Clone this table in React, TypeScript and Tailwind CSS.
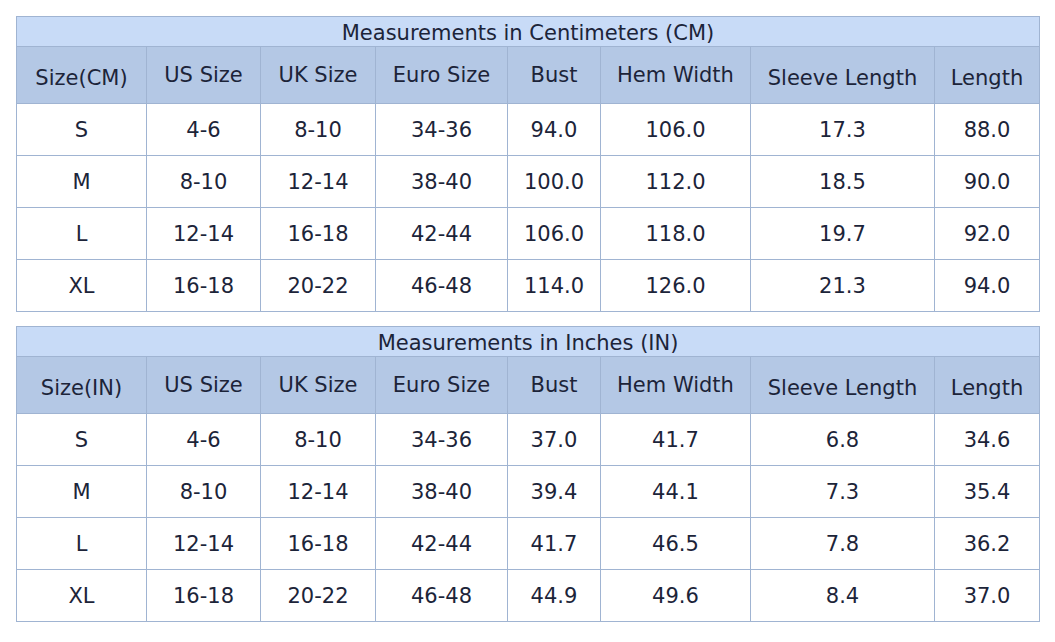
const headers = ["US Size", "UK Size", "Euro Size", "Bust", "Hem Width", "Sleeve Length", "Length"];
const widths = [130, 114, 115, 132, 93, 150, 184, 105];
// columns whose header text sits a little lower in the reference
const lowHeader = [false, false, false, false, false, true, true];

type Table = {
  title: string;
  unit: string;
  rows: string[][];
};

const tables: Table[] = [
  {
    title: "Measurements in Centimeters (CM)",
    unit: "Size(CM)",
    rows: [
      ["S", "4-6", "8-10", "34-36", "94.0", "106.0", "17.3", "88.0"],
      ["M", "8-10", "12-14", "38-40", "100.0", "112.0", "18.5", "90.0"],
      ["L", "12-14", "16-18", "42-44", "106.0", "118.0", "19.7", "92.0"],
      ["XL", "16-18", "20-22", "46-48", "114.0", "126.0", "21.3", "94.0"],
    ],
  },
  {
    title: "Measurements in Inches (IN)",
    unit: "Size(IN)",
    rows: [
      ["S", "4-6", "8-10", "34-36", "37.0", "41.7", "6.8", "34.6"],
      ["M", "8-10", "12-14", "38-40", "39.4", "44.1", "7.3", "35.4"],
      ["L", "12-14", "16-18", "42-44", "41.7", "46.5", "7.8", "36.2"],
      ["XL", "16-18", "20-22", "46-48", "44.9", "49.6", "8.4", "37.0"],
    ],
  },
];

function SizeTable({ table }: { table: Table }) {
  return (
    <table className="table-fixed border-collapse w-[1023px] text-[#1c2439]">
      <colgroup>
        {widths.map((w, i) => (
          <col key={i} style={{ width: w }} />
        ))}
      </colgroup>
      <thead>
        <tr>
          <th colSpan={8} className="h-[29px] p-0 pt-[4px] border border-[#a0b4d2] bg-[#c8dbf7] font-normal text-[21px] leading-[25px]">
            {table.title}
          </th>
        </tr>
        <tr>
          <th className="h-[57px] p-0 pt-[7px] border border-[#a0b4d2] bg-[#b4c8e5] font-normal text-[21px]">
            {table.unit}
          </th>
          {headers.map((h, i) => (
            <th
              key={h}
              className={
                (lowHeader[i] ? "pt-[7px]" : "pt-[2px]") +
                " h-[57px] p-0 border border-[#a0b4d2] bg-[#b4c8e5] font-normal text-[21px]"
              }>
              {h}
            </th>
          ))}
        </tr>
      </thead>
      <tbody>
        {table.rows.map((r) => (
          <tr key={r[0]}>
            {r.map((c, i) => (
              <td key={i} className="h-[52px] p-0 pt-[3px] border border-[#a0b4d2] bg-white text-center text-[21px]">
                {c}
              </td>
            ))}
          </tr>
        ))}
      </tbody>
    </table>
  );
}

export default function App() {
  return (
    <div className="w-[1055px] h-[642px] bg-white pt-4 pl-4" style={{ fontFamily: '"DejaVu Sans", Verdana, sans-serif' }}>
      <div className="flex flex-col gap-[14px]">
        {tables.map((t) => (
          <SizeTable key={t.unit} table={t} />
        ))}
      </div>
    </div>
  );
}
